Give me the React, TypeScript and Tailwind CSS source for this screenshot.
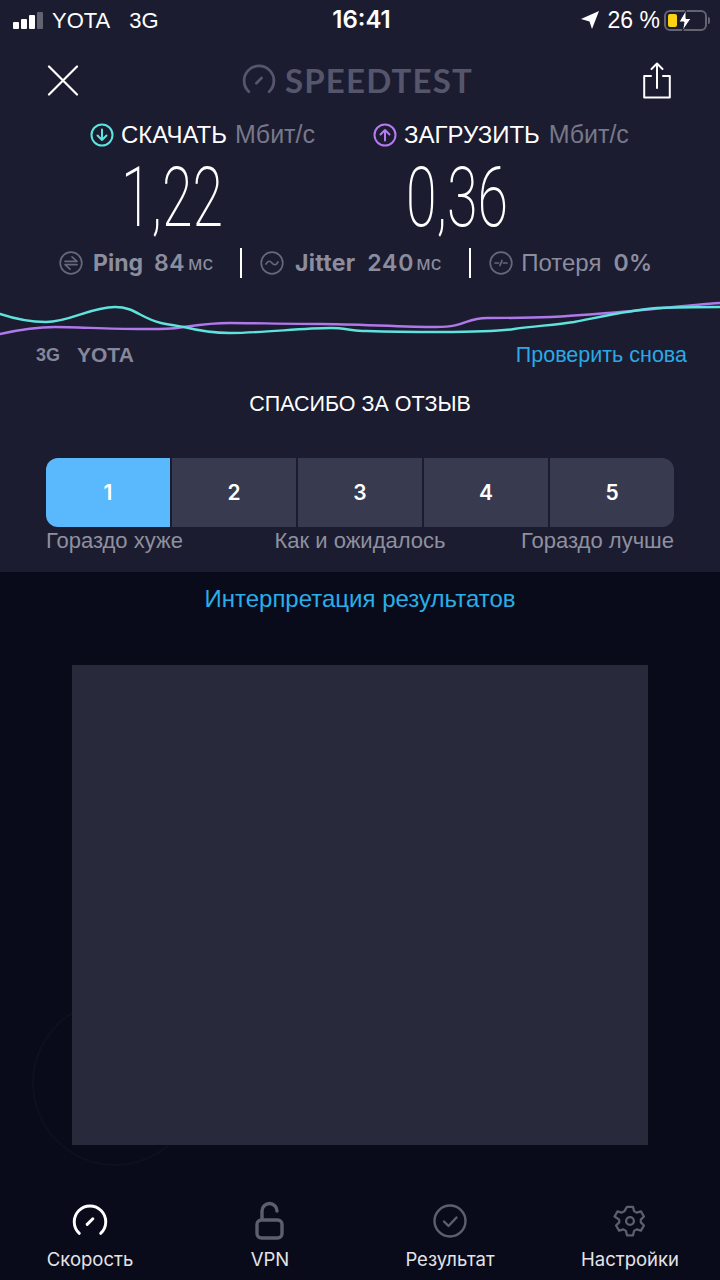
import React from "react";

const Gauge = ({ size, color, sw }: { size: number; color: string; sw: number }) => (
  <svg width={size} height={size} viewBox="0 0 32 32" fill="none" stroke={color} strokeWidth={sw} strokeLinecap="round">
    <path d="M6.500 27A14 14 0 1 1 25.500 27" />
    <path d="M13.500 19L18.500 14" />
  </svg>
);

const CircleArrow = ({ color, up }: { color: string; up?: boolean }) => (
  <svg width="24" height="24" viewBox="0 0 24 24" fill="none" stroke={color} strokeWidth="2" strokeLinecap="round" strokeLinejoin="round">
    <circle cx="12" cy="12" r="10.500" />
    {up ? <path d="M12 17.500V7M7.500 11.500L12 7l4.500 4.500" /> : <path d="M12 6.500V17M7.500 12.500L12 17l4.500-4.500" />}
  </svg>
);

const StatIcon = ({ kind }: { kind: "ping" | "jitter" | "loss" }) => (
  <svg width="24" height="24" viewBox="0 0 24 24" fill="none" stroke="#66677a" strokeWidth="1.700" strokeLinecap="round" strokeLinejoin="round">
    <circle cx="12" cy="12" r="10.800" />
    {kind === "ping" && <path d="M6 10.300H18L13 5.800M18 13.700H6l5 4.500" />}
    {kind === "jitter" && <path d="M6 13c2-3.500 4-3.500 6-1s4 2.500 6-1" />}
    {kind === "loss" && <path d="M6 12h3.500M14.500 12H18M13 9.500L11 14.500" />}
  </svg>
);

const rateCells = ["1", "2", "3", "4", "5"];

const tabs = [
  { label: "Скорость", icon: <Gauge size={36} color="#ffffff" sw={2.6} /> },
  {
    label: "VPN",
    icon: (
      <svg width="36" height="40" viewBox="0 0 36 40" fill="none" stroke="#5d5e70" strokeWidth="3.400" strokeLinecap="round">
        <rect x="5" y="19" width="25" height="18" rx="4.500" />
        <path d="M10 18v-8a7.500 7.500 0 0 1 15 0" />
      </svg>
    ),
  },
  {
    label: "Результат",
    icon: (
      <svg width="36" height="36" viewBox="0 0 36 36" fill="none" stroke="#5d5e70" strokeWidth="2.400" strokeLinecap="round" strokeLinejoin="round">
        <circle cx="18" cy="18" r="15.500" />
        <path d="M12 18.500l4.500 4.500 8-8.500" />
      </svg>
    ),
  },
  {
    label: "Настройки",
    icon: (
      <svg width="36" height="36" viewBox="0 0 24 24" fill="none" stroke="#5d5e70" strokeWidth="1.500" strokeLinecap="round" strokeLinejoin="round">
        <path d="M10 2.500h4l.7 2.900 1.700 1 2.900-.8 2 3.400-2.100 2.100v1.800l2.100 2.100-2 3.400-2.900-.8-1.700 1-.7 2.900h-4l-.7-2.900-1.700-1-2.900.8-2-3.400 2.100-2.100v-1.800L1.700 9l2-3.400 2.900.8 1.700-1z" />
        <circle cx="12" cy="12" r="2.600" />
      </svg>
    ),
  },
];

export default function App() {
  return (
    <div className="relative w-[720px] h-[1280px] overflow-hidden bg-[#0a0b1a] font-['Inter',sans-serif] text-white">
      {/* top result panel */}
      <div className="h-[572px] bg-[#1b1c30]">
        <div className="h-[40px] flex items-center justify-between pl-[13px] pr-[10px] text-[22px] font-['Liberation_Sans',sans-serif]">
          <div className="w-[240px] flex items-center">
            <div className="flex items-end gap-[2px] h-[17px]">
              <div className="w-[6px] h-[7px] bg-white rounded-[1px]" />
              <div className="w-[6px] h-[10px] bg-white rounded-[1px]" />
              <div className="w-[6px] h-[14px] bg-white rounded-[1px]" />
              <div className="w-[6px] h-[17px] bg-[#62636f] rounded-[1px]" />
            </div>
            <span className="ml-[9px]">YOTA</span>
            <span className="ml-[19px]">3G</span>
          </div>
          <span className="font-semibold text-[24px] font-['Inter',sans-serif]">16:41</span>
          <div className="w-[240px] flex items-center justify-end">
            <svg width="18" height="18" viewBox="0 0 18 18" fill="#ffffff">
              <path d="M0 8L18 0l-7 18-2.500-7.500z" />
            </svg>
            <span className="ml-[9px] whitespace-pre text-[23px]">26 %</span>
            <div className="relative ml-[4px] w-[43px] h-[21px] rounded-[6px] border-2 border-[#63646f] p-[2px]">
              <div className="w-[9px] h-full rounded-[2px] bg-[#fbd314]" />
              <svg className="absolute left-[12px] -top-[2px]" width="14" height="21" viewBox="0 0 14 21" fill="#ffffff" stroke="#1b1c30" strokeWidth="1">
                <path d="M8 0L1 12h5L4.500 21 13 8.500H8z" />
              </svg>
            </div>
            <div className="ml-[1px] w-[2px] h-[7px] rounded-r-sm bg-[#63646f]" />
          </div>
        </div>

        <div className="h-[80px] flex items-center justify-between pl-[47px] pr-[49px]">
          <svg width="32" height="32" viewBox="0 0 32 32" stroke="#ffffff" strokeWidth="2.200" strokeLinecap="round">
            <path d="M2 2.500L30 30.500M30 2.500L2 30.500" />
          </svg>
          <div className="mr-[7px] flex items-center gap-[9px]">
            <Gauge size={34} color="#55566c" sw={2.6} />
            <span className="text-[33px] leading-none font-bold tracking-[1.2px] text-[#55566c] font-['Lato',sans-serif]">SPEEDTEST</span>
          </div>
          <svg width="28" height="37" viewBox="0 0 28 37" fill="none" stroke="#ffffff" strokeWidth="2" strokeLinecap="round" strokeLinejoin="round">
            <path d="M8 14H1.200V35.500H26.800V14H20M14 26V1.500M8.500 7L14 1.500 19.500 7" />
          </svg>
        </div>

        <div className="h-[30px] flex items-center text-[24px] font-['Liberation_Sans',sans-serif]">
          <div className="ml-[90px]"><CircleArrow color="#5ce5dd" /></div>
          <span className="ml-[7px]">СКАЧАТЬ</span>
          <span className="ml-[8px] text-[25px] text-[#77788a]">Мбит/с</span>
          <div className="ml-[58px]"><CircleArrow color="#b57bee" up /></div>
          <span className="ml-[7px]">ЗАГРУЗИТЬ</span>
          <span className="ml-[9px] text-[25px] text-[#77788a]">Мбит/с</span>
        </div>

        <div className="h-[90px] pt-[6px] flex items-center font-['Roboto',sans-serif] font-extralight text-[84px] leading-none">
          <div className="ml-[72px] w-[200px] text-center scale-x-[0.66]">1,22</div>
          <div className="ml-[85px] w-[200px] text-center scale-x-[0.66]">0,36</div>
        </div>

        <div className="h-[46px] flex items-center text-[23px] text-[#8c8d9e]">
          <div className="ml-[59px]"><StatIcon kind="ping" /></div>
          <span className="ml-[10px] font-bold">Ping</span>
          <span className="ml-[11px] font-semibold tracking-[0.5px]">84</span>
          <span className="ml-[3px] text-[21px] font-['Liberation_Sans',sans-serif]">мс</span>
          <div className="ml-[27px] w-[2px] h-[30px] bg-white" />
          <div className="ml-[18px]"><StatIcon kind="jitter" /></div>
          <span className="ml-[11px] font-bold tracking-[0.3px]">Jitter</span>
          <span className="ml-[12px] font-semibold tracking-[0.8px]">240</span>
          <span className="ml-[2px] text-[21px] font-['Liberation_Sans',sans-serif]">мс</span>
          <div className="ml-[28px] w-[2px] h-[30px] bg-white" />
          <div className="ml-[18px]"><StatIcon kind="loss" /></div>
          <span className="ml-[8px] text-[24px] font-['Liberation_Sans',sans-serif]">Потеря</span>
          <span className="ml-[12px] font-semibold tracking-[0.5px]">0%</span>
        </div>

        <div className="h-[54px]">
          <svg width="720" height="54" viewBox="0 286 720 54" fill="none" strokeWidth="2.400" strokeLinecap="round">
            <path
              stroke="#b079ea"
              d="M0 334C18 330 35 327 55 327S110 329 138 329S170 329 184 327S210 323 230 323S290 324 321 324S405 327 436 327S465 318 487 318S530 318 551 317S595 314 620 312S690 305 720 303"
            />
            <path
              stroke="#5fe3dc"
              d="M0 314C15 319 30 322 46 322C70 322 90 307 115 307C135 307 140 318 161 323C170 325 178 326 184 327C200 331 212 333 230 333C265 333 300 328 331 328C345 328 352 331 367 331C395 332 415 332 441 332C470 332 495 332 514 329C535 326 555 325 574 322C600 317 630 310 657 308C680 307 700 307 720 307"
            />
          </svg>
        </div>

        <div className="h-[30px] flex items-center justify-between pl-[36px] pr-[33px] text-[21.500px] font-['Liberation_Sans',sans-serif]">
          <div className="flex items-center text-[#86879a] font-bold">
            <span className="text-[18px]">3G</span>
            <span className="ml-[17px] text-[21px]">YOTA</span>
          </div>
          <span className="text-[#2aa9e6]">Проверить снова</span>
        </div>

        <div className="mt-[19px] h-[30px] flex items-center justify-center text-[21.500px] font-['Liberation_Sans',sans-serif]">
          СПАСИБО ЗА ОТЗЫВ
        </div>

        <div className="mt-[39px] mx-[46px] h-[69px] flex gap-[2px] rounded-[12px] overflow-hidden">
          {rateCells.map((n, i) => (
            <div
              key={n}
              className={
                i === 0
                  ? "flex-1 flex items-center justify-center text-[21px] font-semibold bg-[#5ab8fd]"
                  : "flex-1 flex items-center justify-center text-[21px] font-semibold bg-[#383a4f]"
              }
            >
              {n}
            </div>
          ))}
        </div>

        <div className="mx-[46px] h-[27px] grid grid-cols-3 items-center text-[22px] leading-none whitespace-nowrap text-[#8f909f] font-['Liberation_Sans',sans-serif]">
          <span>Гораздо хуже</span>
          <span className="text-center">Как и ожидалось</span>
          <span className="text-right">Гораздо лучше</span>
        </div>
      </div>

      {/* lower area */}
      <div className="h-[54px] flex items-center justify-center text-[24px] text-[#29aee9] font-['Liberation_Sans',sans-serif]">
        Интерпретация результатов
      </div>

      <div className="absolute left-[32px] top-[1000px] w-[166px] h-[166px] rounded-full border-2 border-[#0f101f] pointer-events-none" />
      <div className="relative mt-[39px] mx-[72px] h-[480px] bg-[#282a3c]" />

      <div className="relative mt-[54px] grid grid-cols-4 text-[18.500px]">
        {tabs.map((t) => (
          <div key={t.label} className="flex flex-col items-center">
            <div className="h-[44px] flex items-center justify-center">{t.icon}</div>
            <span className="mt-[5px] text-[#e4e4e8] leading-[22px]">{t.label}</span>
          </div>
        ))}
      </div>
    </div>
  );
}
